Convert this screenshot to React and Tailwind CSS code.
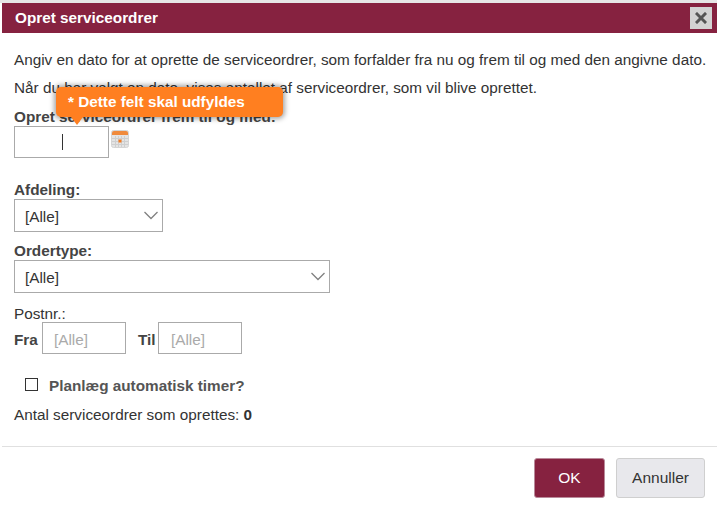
import React from 'react';

function Select({ width }) {
  return (
    <div className={`relative h-[33px] ${width} border border-[#aaa] pl-[10px] pr-4 text-[15.3px] leading-[33px] text-[#333]`}>
      [Alle]
      <svg width="16" height="9" viewBox="0 0 16 9" className="absolute right-[3px] top-[11px]" fill="none" stroke="#808080" strokeWidth="1.3">
        <path d="M1.500 1 L8 7.500 L14.500 1" />
      </svg>
    </div>
  );
}

function CalendarIcon() {
  return (
    <svg width="18" height="18" viewBox="0 0 18 18" className="ml-[2px] mt-[4px]">
      <rect x="0.5" y="0.5" width="17" height="17" rx="2" fill="#e4e4e4" stroke="#d5d5d5" />
      <path d="M1 5V3a2 2 0 0 1 2-2h12a2 2 0 0 1 2 2v2z" fill="#f08a3c" />
      <path d="M1 8.500H17M1 11.500H17M1 14.500H17M4.500 6V17M7.500 6V17M10.500 6V17M13.500 6V17" stroke="#cfcfcf" strokeWidth="1" />
      <rect x="7.500" y="9.500" width="3" height="3" fill="#f47b20" />
    </svg>
  );
}

export default function App() {
  return (
    <div className="w-[717px] h-[507px] bg-white overflow-hidden font-['Liberation_Sans',Arial,sans-serif] text-[15.3px] text-[#333]">
      <div className="h-[3px] bg-[#e6e6e6]" />
      {/* Title bar */}
      <div className="ml-[2px] h-[30px] bg-[#862240] flex items-center justify-between pl-[13px] pr-[5px]">
        <span className="text-white font-bold text-[15.3px]">Opret serviceordrer</span>
        <button className="w-[22px] h-[22px] bg-[#d3d3d3] flex items-center justify-center">
          <svg width="12" height="12" viewBox="0 0 12 12" stroke="#555" strokeWidth="3" strokeLinecap="square">
            <path d="M2 2L10 10M10 2L2 10" />
          </svg>
        </button>
      </div>

      {/* Body */}
      <div className="pl-[14px] pt-[17px]">
        <p className="leading-[20px] whitespace-nowrap">Angiv en dato for at oprette de serviceordrer, som forfalder fra nu og frem til og med den angivne dato.</p>
        <p className="leading-[20px] mt-[8px] whitespace-nowrap">Når du har valgt en dato, vises antallet af serviceordrer, som vil blive oprettet.</p>

        <div className="relative mt-[9px]">
          <label className="block font-bold text-[#444] leading-[19px]">Opret serviceordrer frem til og med:</label>
          <div className="flex items-start">
            <div className="w-[95px] h-[32px] border border-[#aaa] flex items-center pl-[47px]">
              <div className="w-px h-[16px] bg-[#333]" />
            </div>
            <CalendarIcon />
          </div>

          {/* Validation tooltip */}
          <div className="absolute left-[42px] top-[-20px] w-[227px] h-[30px] bg-[#ff7f20] rounded-[5px] shadow-[0_0_5px_2px_rgba(0,0,0,0.35)] pl-[12px] text-white font-bold text-[15.3px] leading-[30px] whitespace-nowrap">
            * Dette felt skal udfyldes
            <div className="absolute left-[15px] top-[30px] w-0 h-0 border-l-[6px] border-r-[6px] border-t-[8px] border-l-transparent border-r-transparent border-t-[#ff7f20]" />
          </div>
        </div>

        <label className="block font-bold text-[#444] leading-[19px] mt-[22px]">Afdeling:</label>
        <Select width="w-[149px]" />

        <label className="block font-bold text-[#444] leading-[19px] mt-[9px]">Ordertype:</label>
        <Select width="w-[316px]" />

        <div className="leading-[17px] mt-[12px]">Postnr.:</div>
        <div className="flex items-center">
          <span className="font-bold text-[#444] w-[28px] pt-[4px]">Fra</span>
          <div className="w-[84px] h-[32px] border border-[#aaa] pl-[11px] leading-[34px] text-[#aaa]">[Alle]</div>
          <span className="font-bold text-[#444] ml-[12px] w-[20px] pt-[4px]">Til</span>
          <div className="w-[84px] h-[32px] border border-[#aaa] pl-[12px] leading-[34px] text-[#aaa]">[Alle]</div>
        </div>

        <div className="flex items-center mt-[22px] ml-[11px] h-[20px]">
          <div className="w-[13px] h-[13px] border border-[#333] mb-[3px]" />
          <span className="ml-[11px] font-bold text-[#555]">Planlæg automatisk timer?</span>
        </div>

        <div className="leading-[20px] mt-[9px]">Antal serviceordrer som oprettes: <b>0</b></div>
      </div>

      {/* Footer */}
      <div className="ml-[2px] mt-[21px] border-t border-[#e0e0e0] flex justify-end pr-[12px] pt-[11px] gap-[11px]">
        <button className="w-[71px] h-[40px] rounded-[3px] bg-[#862240] border border-[#b98a9a] text-white text-[15.500px]">OK</button>
        <button className="w-[89px] h-[40px] rounded-[3px] bg-[#e8e8ec] border border-[#cfcfcf] text-[#333] text-[15.500px]">Annuller</button>
      </div>
    </div>
  );
}
